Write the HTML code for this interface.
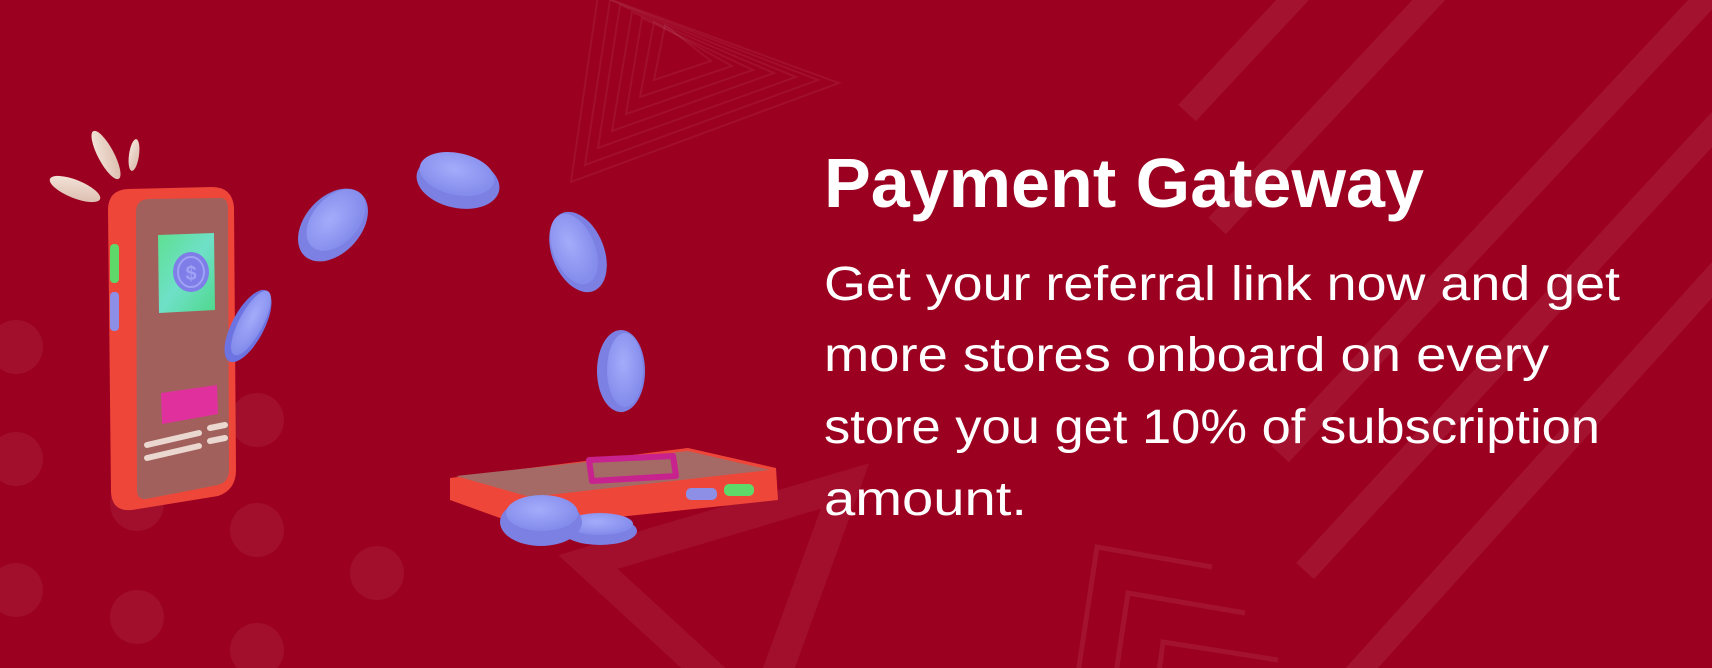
<!DOCTYPE html>
<html><head><meta charset="utf-8"><style>
html,body{margin:0;padding:0;width:1712px;height:668px;overflow:hidden;background:#9c0020}
svg{display:block;position:absolute;left:0;top:0}
</style></head><body>
<svg width="1712" height="668" viewBox="0 0 1712 668" xmlns="http://www.w3.org/2000/svg">
<defs>
<clipPath id="c"><rect width="1712" height="668"/></clipPath>
<radialGradient id="coin" cx="45%" cy="40%" r="65%"><stop offset="0" stop-color="#a3acfa"/><stop offset="1" stop-color="#8088ea"/></radialGradient>
<linearGradient id="card" x1="0" y1="0" x2="1" y2="1"><stop offset="0" stop-color="#5de08f"/><stop offset="0.5" stop-color="#6fe0c8"/><stop offset="1" stop-color="#4fd88c"/></linearGradient>
<linearGradient id="spark" x1="0" y1="0" x2="1" y2="1"><stop offset="0" stop-color="#f6e9df"/><stop offset="1" stop-color="#d9b8a8"/></linearGradient>
</defs>
<g clip-path="url(#c)">
<rect width="1712" height="668" fill="#9c0020"/>
<g stroke="#ffffff" stroke-opacity="0.07" stroke-width="24" fill="none">
<line x1="1187" y1="113" x2="1300" y2="-8"/>
<line x1="1217" y1="226" x2="1440" y2="-12"/>
<line x1="1280" y1="454" x2="1712" y2="-8"/>
<line x1="1305" y1="571" x2="1730" y2="110"/>
<line x1="1342" y1="690" x2="1730" y2="260"/>
</g>
<g stroke="#ffffff" stroke-opacity="0.06" stroke-width="2" fill="none">
<polygon points="571,182 598,-5 839,83"/>
<polygon points="585,165 610,0 818,80"/>
<polygon points="598,148 620,5 796,77"/>
<polygon points="612,131 632,12 774,73"/>
<polygon points="626,114 642,18 753,70"/>
<polygon points="640,97 654,22 732,66"/>
<polygon points="654,80 665,25 711,61"/>
</g>
<polygon points="588,562 845,486 760,720" fill="none" stroke="#ffffff" stroke-opacity="0.06" stroke-width="30" stroke-linejoin="miter"/>
<g stroke="#ffffff" stroke-opacity="0.07" stroke-width="5" fill="none">
<polyline points="1077,680 1097,547 1212,567"/>
<polyline points="1115,680 1128,593 1245,613"/>
<polyline points="1158,680 1163,642 1278,660"/>
</g>
<g fill="#ffffff" fill-opacity="0.06">
<circle cx="16" cy="347" r="27"/><circle cx="16" cy="459" r="27"/><circle cx="16" cy="590" r="27"/>
<circle cx="137" cy="504" r="27"/><circle cx="137" cy="617" r="27"/>
<circle cx="257" cy="420" r="27"/><circle cx="257" cy="530" r="27"/><circle cx="257" cy="650" r="27"/>
<circle cx="377" cy="573" r="27"/>
</g>
<g fill="url(#spark)">
<ellipse cx="106" cy="155" rx="8" ry="27" transform="rotate(-28 106 155)"/>
<ellipse cx="134" cy="155" rx="5" ry="16" transform="rotate(8 134 155)"/>
<ellipse cx="75" cy="189" rx="27" ry="9" transform="rotate(22 75 189)"/>
</g>
<path d="M108,210 Q108,190 128,189 L212,187 Q232,187 234,207 L236,470 Q236,490 218,496 L132,510 Q112,512 111,492 Z" fill="#ef463a"/>
<path d="M136,212 Q136,200 148,199 L220,198 Q228,198 228,208 L229,470 Q229,482 218,485 L146,499 Q137,500 137,490 Z" fill="#a2605c"/>
<rect x="110" y="244" width="9" height="39" rx="4" fill="#5fd86a"/>
<rect x="110" y="292" width="9" height="39" rx="4" fill="#8d8fe6"/>
<polygon points="158,235 214,233 215,310 159,313" fill="url(#card)"/>
<ellipse cx="191" cy="272" rx="18" ry="20" fill="#7f7ee8"/>
<ellipse cx="191" cy="272" rx="13" ry="15" fill="none" stroke="#9ea2f4" stroke-width="2"/>
<text x="191" y="280" font-family="Liberation Sans, sans-serif" font-size="20" font-weight="bold" fill="#9ea2f4" text-anchor="middle">$</text>
<polygon points="161,393 217,385 218,414 162,424" fill="#e0309e"/>
<g stroke="#ead7cf" stroke-width="6" stroke-linecap="round">
<line x1="147" y1="445" x2="199" y2="433"/><line x1="147" y1="458" x2="199" y2="446"/>
<line x1="210" y1="428" x2="225" y2="425"/><line x1="210" y1="441" x2="225" y2="438"/>
</g>
<g>
<ellipse cx="248" cy="326" rx="16" ry="40" transform="rotate(28 248 326)" fill="#6d73e0"/>
<ellipse cx="251" cy="323" rx="12" ry="36" transform="rotate(28 251 323)" fill="url(#coin)"/>
<ellipse cx="333" cy="225" rx="42" ry="28" transform="rotate(-48 333 225)" fill="#7b80e2"/>
<ellipse cx="336" cy="220" rx="36" ry="23" transform="rotate(-48 336 220)" fill="url(#coin)"/>
<ellipse cx="458" cy="182" rx="42" ry="26" transform="rotate(12 458 182)" fill="#7b80e2"/>
<ellipse cx="457" cy="174" rx="38" ry="21" transform="rotate(12 457 174)" fill="url(#coin)"/>
<ellipse cx="578" cy="252" rx="26" ry="42" transform="rotate(-22 578 252)" fill="#7b80e2"/>
<ellipse cx="574" cy="249" rx="21" ry="37" transform="rotate(-22 574 249)" fill="url(#coin)"/>
<ellipse cx="621" cy="371" rx="24" ry="41" fill="#7b80e2"/>
<ellipse cx="625" cy="370" rx="18" ry="37" fill="url(#coin)"/>
</g>
<path d="M450,478 L688,448 L776,468 L778,500 L525,527 L450,500 Z" fill="#ef463a"/>
<path d="M456,476 L688,451 L770,470 L530,497 Z" fill="#a56a66"/>
<polygon points="589,460 673,456 676,476 592,481" fill="none" stroke="#c8228e" stroke-width="6" stroke-linejoin="round"/>
<rect x="686" y="488" width="31" height="12" rx="5" fill="#8d8fe6"/>
<rect x="724" y="484" width="30" height="12" rx="5" fill="#5fd86a"/>
<ellipse cx="600" cy="531" rx="37" ry="14" fill="#7b80e2"/>
<ellipse cx="600" cy="524" rx="33" ry="11" fill="url(#coin)"/>
<ellipse cx="541" cy="522" rx="41" ry="24" fill="#7b80e2"/>
<ellipse cx="542" cy="513" rx="36" ry="18" fill="url(#coin)"/>
<text x="824" y="207" font-family="Liberation Sans, sans-serif" font-size="70" font-weight="bold" fill="#fff" textLength="600" lengthAdjust="spacingAndGlyphs">Payment Gateway</text>
<g font-family="Liberation Sans, sans-serif" font-size="48" fill="#fff">
<text x="824" y="300" textLength="796" lengthAdjust="spacingAndGlyphs">Get your referral link now and get</text>
<text x="824" y="371" textLength="725" lengthAdjust="spacingAndGlyphs">more stores onboard on every</text>
<text x="824" y="443" textLength="776" lengthAdjust="spacingAndGlyphs">store you get 10% of subscription</text>
<text x="824" y="515" textLength="203" lengthAdjust="spacingAndGlyphs">amount.</text>
</g>
</g>
</svg>
</body></html>
